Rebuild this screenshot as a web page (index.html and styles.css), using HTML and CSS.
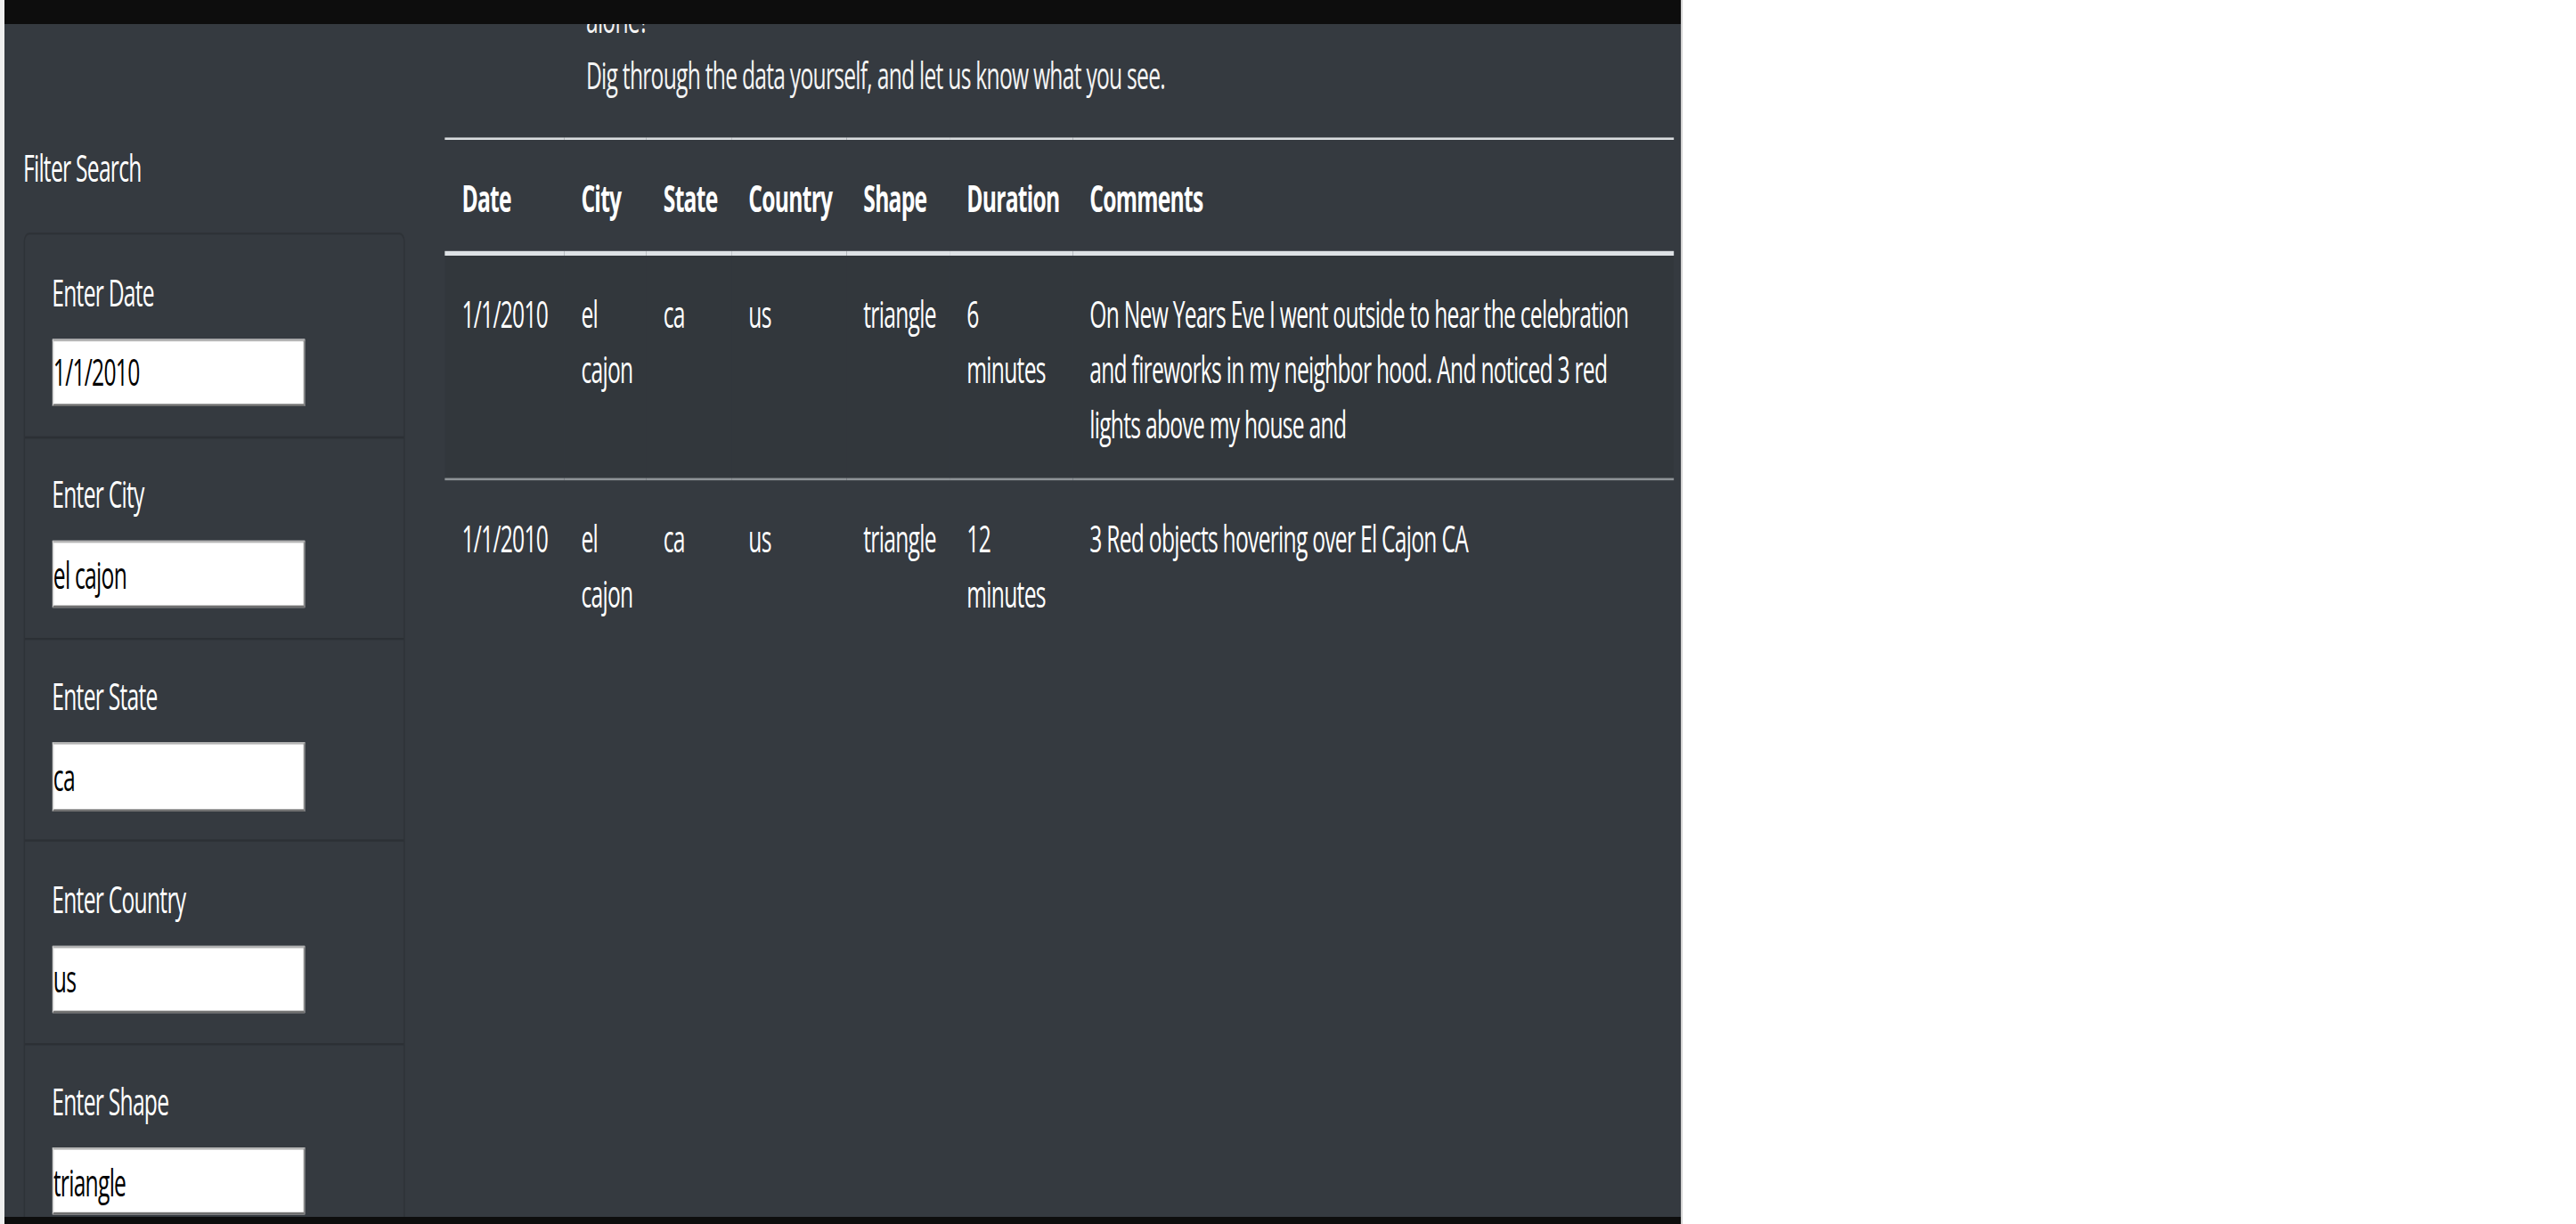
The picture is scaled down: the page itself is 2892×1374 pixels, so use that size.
FILE: index.html
```html
<!DOCTYPE html>
<html lang="en">
<head>
<meta charset="utf-8">
<title>UFO Sightings</title>
<link rel="stylesheet" href="styles.css">
</head>
<body>
<div class="frame">
  <div class="topbar"></div>
  <div class="viewport">
    <div class="page">
      <p class="intro">alone?<br>Dig through the data yourself, and let us know what you see.</p>

      <aside class="sidebar">
        <p class="sidebar-title">Filter Search</p>
        <div class="card">
          <div class="item">
            <label for="f-date">Enter Date</label>
            <input id="f-date" type="text" value="1/1/2010">
          </div>
          <div class="item">
            <label for="f-city">Enter City</label>
            <input id="f-city" type="text" value="el cajon">
          </div>
          <div class="item">
            <label for="f-state">Enter State</label>
            <input id="f-state" type="text" value="ca">
          </div>
          <div class="item">
            <label for="f-country">Enter Country</label>
            <input id="f-country" type="text" value="us">
          </div>
          <div class="item">
            <label for="f-shape">Enter Shape</label>
            <input id="f-shape" type="text" value="triangle">
          </div>
        </div>
      </aside>

      <main class="results">
        <table class="ufo">
          <colgroup>
            <col class="c-date">
            <col class="c-city">
            <col class="c-state">
            <col class="c-country">
            <col class="c-shape">
            <col class="c-duration">
            <col class="c-comments">
          </colgroup>
          <thead>
            <tr>
              <th>Date</th>
              <th>City</th>
              <th>State</th>
              <th>Country</th>
              <th>Shape</th>
              <th>Duration</th>
              <th>Comments</th>
            </tr>
          </thead>
          <tbody>
            <tr>
              <td>1/1/2010</td>
              <td>el cajon</td>
              <td>ca</td>
              <td>us</td>
              <td>triangle</td>
              <td>6<br>minutes</td>
              <td class="comment">On New Years Eve I went outside to hear the celebration<br>and fireworks in my neighbor hood. And noticed 3 red<br>lights above my house and</td>
            </tr>
            <tr>
              <td>1/1/2010</td>
              <td>el cajon</td>
              <td>ca</td>
              <td>us</td>
              <td>triangle</td>
              <td>12<br>minutes</td>
              <td class="comment">3 Red objects hovering over El Cajon CA</td>
            </tr>
          </tbody>
        </table>
      </main>
    </div>
  </div>
  <div class="bottombar"></div>
</div>
</body>
</html>
```
FILE: styles.css
```css
html, body {
  margin: 0;
  padding: 0;
  background: #ffffff;
}

body {
  width: 2892px;
  height: 1374px;
  overflow: hidden;
}

.frame {
  width: 1882px;
  height: 1374px;
  border-left: 5px solid #efefef;
  border-right: 2px solid #d2d2d2;
  background: #0d0d0d;
  display: flex;
  flex-direction: column;
}

.topbar {
  flex: none;
  height: 27px;
  background: #0d0d0d;
}

.bottombar {
  flex: none;
  height: 8px;
  background: #0d0d0d;
}

.viewport {
  flex: none;
  height: 1339px;
  overflow: hidden;
  background: #353a40;
}

.page {
  width: 1222px;
  box-sizing: border-box;
  padding: 0.5px 4.5px 0 13.6px;
  transform: scale(1.54, 2.6);
  transform-origin: 0 0;
  display: grid;
  grid-template-columns: 278px 896.1px;
  grid-template-rows: auto auto;
  column-gap: 29.8px;
  font-family: "Open Sans", "Noto Sans", sans-serif;
  font-size: 16px;
  line-height: 24px;
  letter-spacing: -0.03em;
  color: #ffffff;
}

.intro {
  grid-column: 2;
  grid-row: 1;
  margin: -14.5px 0 15.3px 102.6px;
  color: #f4f4f4;
}

.sidebar {
  grid-column: 1;
  grid-row: 2;
  padding-top: 1px;
}

.sidebar-title {
  margin: 0 0 16px;
}

.card {
  border: 1px solid rgba(0, 0, 0, 0.13);
  border-radius: 4px;
}

.item {
  padding: 12.3px 20px 12.9px;
  border-bottom: 1px solid rgba(0, 0, 0, 0.16);
}

.item label {
  display: block;
  margin-bottom: 8px;
}

.item input {
  display: block;
  width: 184px;
  height: 29.2px;
  box-sizing: border-box;
  margin: 0;
  padding: 1px 0;
  font: inherit;
  letter-spacing: inherit;
  color: #000000;
  background: #ffffff;
  border: 1px solid;
  border-color: #b4b4b4 #8a8a8a #707070 #d4d4d4;
  border-radius: 0;
  outline: none;
}

.results {
  grid-column: 2;
  grid-row: 2;
}

.ufo {
  width: 896.1px;
  table-layout: fixed;
  border-collapse: collapse;
}

.c-date { width: 87px; }
.c-city { width: 60px; }
.c-state { width: 62px; }
.c-country { width: 83.8px; }
.c-shape { width: 75.3px; }
.c-duration { width: 89.6px; }
.c-comments { width: 438.4px; }

.ufo th,
.ufo td {
  padding: 12.6px 12px 11.4px;
  text-align: left;
  vertical-align: top;
  border-top: 1px solid #8e9397;
}

.ufo thead th {
  vertical-align: bottom;
  font-weight: 700;
  border-top: 0.8px solid #d9dcdf;
  border-bottom: 2px solid #dee2e6;
}

.ufo tbody tr:nth-child(odd) {
  background: rgba(0, 0, 0, 0.05);
}

.ufo .comment {
  white-space: nowrap;
}
```
